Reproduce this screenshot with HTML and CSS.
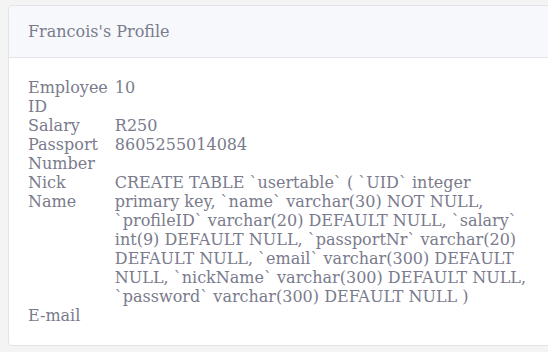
FILE: index.html
```html
<!DOCTYPE html>
<html>
<head>
    <title>Francois's Profile</title>
    <link rel="stylesheet" href="styles.css">
</head>
<body>
    <div class="profile-card">
        <div class="profile-header">Francois's Profile</div>
        <div class="profile-body">
            <div class="profile-grid">
                <div class="profile-label">Employee ID</div>
                <div class="profile-value">10</div>
                <div class="profile-label">Salary</div>
                <div class="profile-value">R250</div>
                <div class="profile-label">Passport Number</div>
                <div class="profile-value">8605255014084</div>
                <div class="profile-label">Nick Name</div>
                <div class="profile-value">CREATE TABLE `usertable` ( `UID` integer primary key, `name` varchar(30) NOT NULL, `profileID` varchar(20) DEFAULT NULL, `salary` int(9) DEFAULT NULL, `passportNr` varchar(20) DEFAULT NULL, `email` varchar(300) DEFAULT NULL, `nickName` varchar(300) DEFAULT NULL, `password` varchar(300) DEFAULT NULL )</div>
                <div class="profile-label">E-mail</div>
                <div class="profile-value"></div>
            </div>
        </div>
    </div>
</body>
</html>
```

FILE: styles.css
```css
html, body {
    overflow: hidden;
}
body {
    margin: 0;
    padding: 5px 0 0 8px;
    background-color: #f4f4f5;
    font-family: "DejaVu Serif", serif;
    font-size: 16px;
    color: #7a7b8c;
}
.profile-card {
    width: 547px;
    background-color: #fff;
    border: 1px solid #e3e4ea;
    border-radius: 4px;
}
.profile-header {
    height: 51px;
    line-height: 51px;
    padding: 0 19px;
    background-color: #f7f8fc;
    border-bottom: 1px solid #e2e3eb;
    border-radius: 4px 4px 0 0;
}
.profile-body {
    padding: 20px 19px 20px;
}
.profile-grid {
    display: grid;
    grid-template-columns: min-content 1fr;
    column-gap: 7px;
    line-height: 19px;
}
```
